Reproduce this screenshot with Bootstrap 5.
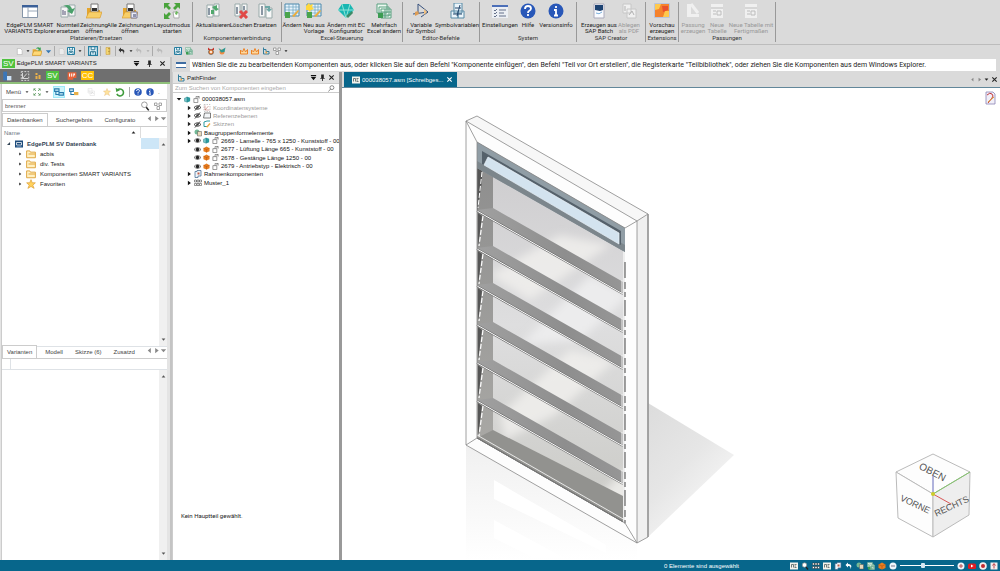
<!DOCTYPE html>
<html lang="de">
<head>
<meta charset="utf-8">
<meta name="viewport" content="width=device-width, initial-scale=1">
<title>EdgePLM SMART VARIANTS</title>
<link href="https://cdn.jsdelivr.net/npm/bootstrap@5.3.0/dist/css/bootstrap.min.css" rel="stylesheet">
<style>
:root{--teal:#07668b;--grey:#dadada;--ui:Roboto,"Liberation Sans",Arial,sans-serif}
body{font:6px/6px "Liberation Sans",Arial,sans-serif;color:#222;background:var(--grey)}
button{font:inherit;color:inherit;border:0;background:none;padding:0}
svg{flex:none;display:block}
.i7{width:7px;height:7px}.i8{width:8px;height:8px}.i10{width:10px;height:10px}.i16{width:16px;height:16px}
.g2{gap:2px}.g3{gap:3px}
/* ribbon */
.ribbon{height:45px;border-bottom:1px solid #bcbcbc;font-family:var(--ui)}
.grp{height:40px;border-right:1px solid #999;margin-top:2px}
.tool{height:32px;display:flex;flex-direction:column;align-items:center;white-space:nowrap;text-align:center;gap:3px}
.tool svg{margin-top:1px}
.w16{width:16px}.w20{width:20px}.w24{width:24px}.w28{width:28px}.w32{width:32px}.w36{width:36px}.w40{width:40px}.w48{width:48px}
.faded{color:#999}
.faded svg{filter:grayscale(1);opacity:.6}
.cap{height:8px;line-height:8px;text-align:center;color:#333}
.pad2{padding:0 2px}
.quick{height:12px}
.split{width:1px;height:10px;background:#aaa}
/* left dock */
.dock{flex:0 0 172px;background:#e4e4e4;border-right:2px solid #c4c4c4}
.dockbody{background:#fff;margin:0 3px 0 1px;border-left:1px solid #ccc}
.title{height:12px;font:6px/8px "Liberation Sans",Arial,sans-serif;background:#e3e3e3}
.svbox{background:#4fc23f;color:#fff;font:8px/9px "Liberation Sans",Arial,sans-serif;padding:0 1px}
.modes{height:15px;background:#6f6f6f;border-bottom:2px solid #8fc07a}
.menubar{height:15px;color:#444;background:#fff}
.find{height:13px;border:1px solid #ccc;background:#fff}
.find input,.seek input{border:0;outline:0;background:none;min-width:0;color:#555;font-size:6px;line-height:8px;padding:0 2px}
.tabs{height:13px;color:#444;border-bottom:1px solid #ccc}
.tabs button{height:12px;padding:0 4px}
.tabs .on{border:1px solid #ccc;border-bottom:0;background:#fff;height:13px}
.toptabs{margin-top:2px}
.hdrow{height:11px}
.hdrow .end{width:27px;border-left:1px solid #ddd}
.vtree li{height:10px}
.vtree li:first-child{height:11px;font-weight:bold;color:#345}
.vtree .sel{width:18px;background:#cde6f7}
.vsize{flex:0 0 208px}
.bar{width:8px;background:#f0f0f0;color:#555}
/* prompt */
.prompt{height:15px;font:7px/12px Roboto,"Liberation Sans",sans-serif;background:var(--grey)}
.prompt output{height:12px;background:#fff;white-space:nowrap;overflow:hidden}
/* path finder */
.finder{flex:0 0 170px;min-width:0;overflow:hidden;background:#fff;border-right:3px solid #999;border-left:1px solid #ccc}
.finder .title{border-bottom:1px solid #ccc}
.seek{height:9px;border-bottom:1px solid #ccc}
.seek input::placeholder{color:#aaa}
.ptree{height:92px;margin-top:2px;padding-left:3px;display:grid;grid-auto-rows:1fr;line-height:8px;white-space:nowrap;color:#111}
.ptree .dim{color:#999}
.ptree .d1{padding-left:10px}.ptree .d2{padding-left:18px}
.note{padding:0 0 41px 8px;font-family:var(--ui)}
/* document */
.doctabs{height:16px;border-bottom:1px solid #62879a}
.doctab{background:var(--teal);color:#fff;width:113px;white-space:nowrap}
.stage{background:#fff;min-height:0}
.status{height:11px;background:var(--teal);color:#fff}
.zoom{appearance:none;width:54px;height:8px;background:linear-gradient(#fff,#fff) center/100% 1px no-repeat}
.zoom::-webkit-slider-thumb{appearance:none;width:4px;height:5px;background:#d7e8f2;border-radius:1px}
</style>
</head>
<body class="vh-100 d-flex flex-column overflow-hidden">
<svg width="0" height="0" class="position-absolute" aria-hidden="true"><defs>
<symbol id="panes" viewBox="0 0 16 16"><path d="M.5 2.500h15v12H.5z" fill="#fff" stroke="#8595a8"/><path d="M0 2h16v2.500H0z" fill="#3b6098"/><path d="M6 4v10M6 8h9" stroke="#9aa8b8"/></symbol>
<symbol id="swap" viewBox="0 0 16 16"><path d="M1 4h7v10H1zM9 2h6v11H9z" fill="#f4f4f4" stroke="#9aa"/><path d="M3 3q7-3 9 3l3-1-3 6-5-3 2-1q-2-4-6-4z" fill="#4aa06a"/><path d="M3 7v5M5 8v4" stroke="#557"/></symbol>
<symbol id="folder" viewBox="0 0 16 16"><path d="M1 5h5l1 2h7v8H1z" fill="#e4a52d"/><path d="M5 1h7v8H5z" fill="#fff" stroke="#777"/><path d="M6 5h5v3H6z" fill="#333"/><path d="M0 15l3-6h13l-2 6z" fill="#f8cf68" stroke="#d3952a" stroke-width=".6"/></symbol>
<symbol id="folders" viewBox="0 0 16 16"><use href="#folder"/><path d="M9 9h6v6H9z" fill="#e9eaf4" stroke="#7a7a98"/><path d="M11 11h3v3h-3z" fill="#8f93ad"/></symbol>
<symbol id="layout" viewBox="0 0 16 16"><path d="M0 0h6L4 2l3 3-2 2-3-3-2 2zM16 0v6l-2-2-3 3-2-2 3-3-2-2zM0 16v-6l2 2 3-3 2 2-3 3 2 2z" fill="#49a33c"/><path d="M9 9h3l3 1v5h-5z" fill="#fff" stroke="#aaa"/><path d="M12 8l2 1-1 3-2-1z" fill="#6db95d"/></symbol>
<symbol id="sync" viewBox="0 0 16 16"><path d="M2 2h6v12H2zM9 1h5v12H9z" fill="#f8f8f8" stroke="#9aa"/><path d="M7 4l5-2v3l2 1-3 2zM6 7h3v4H6z" fill="#50a86d"/><path d="M4 5v7" stroke="#678" stroke-width="1.500"/></symbol>
<symbol id="del" viewBox="0 0 16 16"><path d="M2 1h5v12H2zM9 1h5v7H9z" fill="#f8f8f8" stroke="#9aa"/><path d="M4 4v7M11 3v4" stroke="#678" stroke-width="1.500"/><path d="M7 8l7 7M14 8l-7 7" stroke="#e04a47" stroke-width="3"/></symbol>
<symbol id="repl" viewBox="0 0 16 16"><path d="M2 1h6v13H2zM9 5h6v10H9z" fill="#f8f8f8" stroke="#9aa"/><path d="M5 3v9" stroke="#678" stroke-width="1.500"/><path d="M8 3h5v3h2l-3 3-3-3h2V5H8z" fill="#6da7a6"/></symbol>
<symbol id="grid" viewBox="0 0 16 16"><path d="M1 1h14v12H1z" fill="#e8f4fc" stroke="#4a88ac"/><path d="M1 4h14M1 7h14M1 10h14M5 1v12M9 1v12M12 1v12" stroke="#6aa1bd" stroke-width=".7"/><path d="M1 9h5v6H1z" fill="#4aa44c"/><path d="M8 13l6-6 1 1-5 6z" fill="#efac37"/></symbol>
<symbol id="gridnew" viewBox="0 0 16 16"><use href="#grid"/><path d="M3 0l1 2 3-1-1 3 2 2-3 1-1 2-2-2-2 0V3z" fill="#ffd83d"/></symbol>
<symbol id="gem" viewBox="0 0 16 16"><path d="M4 1h8l4 6-8 8-8-8z" fill="#19b6b2"/><path d="M4 1l4 14 4-14M0 7h16" stroke="#8de5d8" fill="none"/><path d="M8 13l6-5 1 2-5 5z" fill="#3d8b67"/></symbol>
<symbol id="multi" viewBox="0 0 16 16"><path d="M1 1h10v9H1zM3 4h10v9H3zM5 6h10v9H5z" fill="#eefaf2" stroke="#5aa080"/><path d="M5 9h10M5 12h10M9 6v9" stroke="#5aa080"/><path d="M2 10h5v5H2z" fill="#3b9c52"/></symbol>
<symbol id="vari" viewBox="0 0 16 16"><path d="M5 1v10M0 11l15-2M5 1l10 8-7 5" stroke="#36507c" fill="none"/><path d="M2 9l3-1 1 3-4 2z" fill="#dc9c55"/><path d="M11 6l3 3-3 3z" fill="#f2c180"/></symbol>
<symbol id="symv" viewBox="0 0 16 16"><path d="M5 0h8v10H5zM2 8h7v7H2zM9 8h6v7H9z" fill="#eaf4fa" stroke="#5789a5"/><path d="M11 2L8 13M6 5h6M4 11h9" stroke="#24466d"/></symbol>
<symbol id="settings" viewBox="0 0 16 16"><path d="M0 2h16v13H0z" fill="#eceff4"/><path d="M0 2h16v2H0z" fill="#4c6fb8"/><path d="M2 7l1 1 2-2M2 10l1 1 2-2M2 13l1 1 2-2M7 7h7M7 10h5M7 13h7" stroke="#65718a" fill="none"/></symbol>
<symbol id="help" viewBox="0 0 16 16"><circle cx="8" cy="8" r="7.500" fill="#2857b8"/><path d="M5 6q0-3 3-3t3 2.500Q11 7 9 8q-1 .5-1 2M8 11v2" stroke="#fff" stroke-width="1.800" fill="none"/></symbol>
<symbol id="info" viewBox="0 0 16 16"><circle cx="8" cy="8" r="7.500" fill="#2857b8"/><path d="M8 3v2M6 7h2v5M6 12.500h4" stroke="#fff" stroke-width="1.800" fill="none"/></symbol>
<symbol id="sap" viewBox="0 0 16 16"><path d="M3 1h10v14H3z" fill="#f9fbff" stroke="#aab"/><path d="M4 2h8v5l-3 1-5-1z" fill="#1d4372"/><path d="M5 10q3 2 6-1" stroke="#7cb0dc" fill="none"/></symbol>
<symbol id="sheet" viewBox="0 0 16 16"><path d="M2 1h8v9H2zM6 6h9v9H6z" fill="#fff" stroke="#bbb"/><path d="M8 12l3-4 2 4M4 3v5" stroke="#999" fill="none"/></symbol>
<symbol id="fits" viewBox="0 0 16 16"><path d="M2 1h12v14H2z" fill="#fff"/><path d="M2 5h12M4 8h3M4 11h3M8 12V8h4v4z" stroke="#aaa" fill="none"/></symbol>
<symbol id="heat" viewBox="0 0 16 16"><path d="M1 1h14v13H1z" fill="#f5822c"/><path d="M1 1h6l-2 5-4 1zM9 14l2-6h4v6z" fill="#ffc94d"/><path d="M8 3h6v4L9 9z" fill="#e8502e"/><path d="M.5.5h15v14H.5z" fill="none" stroke="#b9c4dc"/></symbol>
<symbol id="fit" viewBox="0 0 16 16"><path d="M2 1h4v10h8v3H2z" fill="#fff"/><path d="M6 1l7 9" stroke="#fff" stroke-width="3"/></symbol>
<symbol id="page" viewBox="0 0 16 16"><path d="M3 1h7l4 4v10H3z" fill="#fff" stroke="#999"/></symbol>
<symbol id="open" viewBox="0 0 16 16"><path d="M1 5h5l2 2h6v8H1z" fill="#e5ad36"/><path d="M0 15l3-7h13l-2 7z" fill="#ffd977" stroke="#c98e25"/><path d="M6 5q2-5 7-2l1-2v6H9l2-2q-3-2-5 0z" fill="#39a153"/></symbol>
<symbol id="fold" viewBox="0 0 16 16"><path d="M1 3h5l1 2h8v9H1z" fill="#fff1c4" stroke="#dda23a" stroke-width="1.500"/><path d="M4 8h11" stroke="#e8b350" stroke-width="2"/></symbol>
<symbol id="save" viewBox="0 0 16 16"><path d="M1 1h14v14H1z" fill="#e4f5fc" stroke="#2680a3" stroke-width="2"/><path d="M5 1v5h6V1M4 15v-6h8v6M6 11h4" stroke="#27718e" stroke-width="1.500" fill="none"/></symbol>
<symbol id="undo" viewBox="0 0 16 16"><path d="M6 1L1 6l5 5V8q7-1 4 7 7-10-4-11z" fill="currentColor"/></symbol>
<symbol id="bug" viewBox="0 0 16 16"><circle cx="8" cy="10" r="5" fill="#f08c44" stroke="#333"/><path d="M2 1l6 5 6-5v5H2z" fill="#c6362f"/><circle cx="8" cy="10" r="2" fill="#fff"/></symbol>
<symbol id="bug2" viewBox="0 0 16 16"><circle cx="8" cy="10" r="5" fill="#f08c44"/><path d="M1 2l6 4 8-5-2 9-7 1z" fill="#2d9891"/></symbol>
<symbol id="orange" viewBox="0 0 16 16"><path d="M1 14V6l4 4 3-7 3 7 4-5v9z" fill="#fbd9a1" stroke="#ec8326" stroke-width="2"/></symbol>
<symbol id="stair" viewBox="0 0 16 16"><path d="M3 1v13h11V9H8V5H3" fill="none" stroke="#347e9c" stroke-width="2"/><path d="M7 9h3v4H7z" fill="#eda33e"/></symbol>
<symbol id="box" viewBox="0 0 16 16"><path d="M8 1l7 4v7l-7 3-7-3V5z" fill="#e87e20"/><path d="M1 5l7 3 7-3M8 8v7" stroke="#a94c0b" fill="none"/></symbol>
<symbol id="asm" viewBox="0 0 16 16"><path d="M6 1l8 3v8l-7 3z" fill="#2c9ba0"/><path d="M1 5l6-2v11l-6-2z" fill="#75c7cb" stroke="#24767d"/></symbol>
<symbol id="lock" viewBox="0 0 16 16"><path d="M2 6h9v9H2z" fill="#fff" stroke="#666" stroke-width="1.500"/><path d="M7 6V1h7v5M10 4l4-3" fill="none" stroke="#666" stroke-width="1.500"/></symbol>
<symbol id="eye" viewBox="0 0 16 16"><path d="M0 8q8-9 16 0-8 9-16 0z" fill="#fff" stroke="#333" stroke-width="1.500"/><circle cx="8" cy="8" r="4" fill="#222"/></symbol>
<symbol id="eyeoff" viewBox="0 0 16 16"><path d="M0 8q8-8 16 0-8 8-16 0z" fill="none" stroke="#333" stroke-width="2"/><circle cx="8" cy="8" r="3" fill="#555"/><path d="M2 15L14 1" stroke="#333" stroke-width="2"/></symbol>
<symbol id="axes" viewBox="0 0 16 16"><path d="M2 1h12v14H2z" fill="#fff" stroke="#999" stroke-dasharray="3 2"/><path d="M4 3v9h9M4 12l7-8" fill="none" stroke="#b35a53"/></symbol>
<symbol id="axesw" viewBox="0 0 16 16"><path d="M2 1h12v14H2z" fill="none" stroke="#ddd" stroke-width="1.500" stroke-dasharray="3 2"/><path d="M4 3v9h9M4 12l7-8" fill="none" stroke="#ddd" stroke-width="1.500"/></symbol>
<symbol id="steps" viewBox="0 0 16 16"><path d="M3 2h4v4H3zM3 8h4v6H3zM9 6h4v8H9z" fill="#e9b04a"/></symbol>
<symbol id="plane" viewBox="0 0 16 16"><path d="M3 2h12v10H1z" fill="#f3f5f7" stroke="#555" stroke-width="1.500"/></symbol>
<symbol id="sketch" viewBox="0 0 16 16"><path d="M2 13V4l6-2h6M2 13h7" fill="none" stroke="#2c9ba0" stroke-width="2"/><path d="M6 14l7-8 2 2-6 7z" fill="#eaaa41"/></symbol>
<symbol id="feat" viewBox="0 0 16 16"><circle cx="6" cy="6" r="5" fill="#72b896"/><path d="M7 5h8v9H7z" fill="#e8d9bb" stroke="#555"/></symbol>
<symbol id="frame" viewBox="0 0 16 16"><path d="M2 3h4V1h8v11H8v3H2z" fill="#edf5fb" stroke="#456c93" stroke-width="1.500"/><path d="M7 5h4v4H7z" fill="#c45c45"/></symbol>
<symbol id="dots" viewBox="0 0 16 16"><path d="M1 2h4v4H1zM6 2h4v4H6zM11 2h4v4h-4zM1 9h4v4H1zM6 9h4v4H6zM11 9h4v4h-4z" fill="#fff" stroke="#333"/></symbol>
<symbol id="star" viewBox="0 0 16 16"><path d="M8 1l2 5h5l-4 4 2 5-5-3-5 3 2-5-4-4h5z" fill="#ffd15c" stroke="#d9962b"/></symbol>
<symbol id="db" viewBox="0 0 16 16"><path d="M0 1h16v14H0z" fill="#1d4b7b"/><path d="M3 5h10v5H3z" fill="none" stroke="#fff" stroke-width="1.500"/><path d="M3 13h10" stroke="#86b0d8"/></symbol>
<symbol id="mag" viewBox="0 0 16 16"><circle cx="7" cy="6" r="4.500" fill="#fff" stroke="#888" stroke-width="1.300"/><path d="M10 10l4 5" stroke="#222" stroke-width="2.500"/></symbol>
<symbol id="magl" viewBox="0 0 16 16"><circle cx="9" cy="6" r="4.500" fill="none" stroke="#555" stroke-width="1.500"/><path d="M6 9l-5 6" stroke="#555" stroke-width="1.500"/></symbol>
<symbol id="filt" viewBox="0 0 16 16"><path d="M1 2h5v5H1zM10 2h5v5h-5zM6 9h5v6H6z" fill="#fff" stroke="#888" stroke-width="1.500"/></symbol>
<symbol id="expand" viewBox="0 0 16 16"><path d="M1 1h5L1 6zM15 1v5l-5-5zM1 15v-5l5 5zM15 15h-5l5-5z" fill="#58965b"/><path d="M3 3l3 3M13 3l-3 3M3 13l3-3M13 13l-3-3" stroke="#58965b" stroke-width="1.500"/></symbol>
<symbol id="link" viewBox="0 0 16 16"><path d="M1 3h7v4H1zM8 9h7v4H8zM3 7v5h5" fill="none" stroke="#2779ac" stroke-width="1.700"/></symbol>
<symbol id="link2" viewBox="0 0 16 16"><path d="M1 3h6v4H1zM3 7v5h5" fill="none" stroke="#2779ac" stroke-width="1.700"/><path d="M8 8h7v5H8z" fill="#e9b04a"/></symbol>
<symbol id="refresh" viewBox="0 0 16 16"><path d="M4 5a5.500 5.500 0 1 1-1 6" fill="none" stroke="#3f9b3c" stroke-width="2.500"/><path d="M1 1l1 7 6-3z" fill="#3f9b3c"/></symbol>
<symbol id="tile" viewBox="0 0 16 16"><path d="M2 1h6v14H2z" fill="#3a76b8"/><path d="M8 8h7v7H8z" fill="#cfe2f5"/></symbol>
<symbol id="badge1" viewBox="0 0 16 16"><path d="M1 2h14v9h-5v3H1z" fill="#e8633a"/><path d="M4 4v5M7 4v5M10 4v5M12 4v3" stroke="#fff" stroke-width="1.500"/></symbol>
<symbol id="ruler" viewBox="0 0 16 16"><path d="M4 1h8v14H4z" fill="#f5d672" stroke="#c79a36"/><path d="M8 3h4M9 6h3M8 9h4M9 12h3" stroke="#8a6820"/></symbol>
<symbol id="plate" viewBox="0 0 16 16"><path d="M0 1h16v14H0z" fill="#f3f3ec"/><path d="M3 11V5h4v6M9 5h4M9 8h3M9 11h4" stroke="#455" stroke-width="1.500" fill="none"/></symbol>
<symbol id="pinb" viewBox="0 0 16 16"><path d="M5 1h6v8h2v2H9v5H7v-5H3V9h2z" fill="#222"/></symbol>
<symbol id="down" viewBox="0 0 16 16"><path d="M2 2h12v3H2zM2 7h12l-6 7z" fill="#111"/></symbol>
<symbol id="cross" viewBox="0 0 16 16"><path d="M3 3l10 10M13 3L3 13" stroke="currentColor" stroke-width="2.500"/></symbol>
<symbol id="tl" viewBox="0 0 16 16"><path d="M11 2v12L4 8z" fill="currentColor"/></symbol>
<symbol id="tr" viewBox="0 0 16 16"><path d="M5 2v12l8-6z" fill="currentColor"/></symbol>
<symbol id="tse" viewBox="0 0 16 16"><path d="M13 3v10H3z" fill="currentColor"/></symbol>
<symbol id="td" viewBox="0 0 16 16"><path d="M2 5h12l-6 7z" fill="currentColor"/></symbol>
<symbol id="tu" viewBox="0 0 16 16"><path d="M2 11h12L8 4z" fill="currentColor"/></symbol>
<symbol id="play" viewBox="0 0 16 16"><rect y="3" width="16" height="11" rx="3" fill="#e01c23"/><path d="M6 5v6l5-3z" fill="#fff"/></symbol>
<symbol id="rec" viewBox="0 0 16 16"><circle cx="8" cy="8" r="7.500" fill="#f5efef"/><circle cx="8" cy="8" r="4" fill="#c02b31"/></symbol>
<symbol id="plus" viewBox="0 0 16 16"><circle cx="8" cy="8" r="7" fill="#eff6fa"/><path d="M4 8h8M8 4v8" stroke="#bb4e4e" stroke-width="2"/></symbol>
<symbol id="minus" viewBox="0 0 16 16"><circle cx="8" cy="8" r="7" fill="#eff6fa"/><path d="M4 8h8" stroke="#778" stroke-width="2"/></symbol>
<symbol id="share" viewBox="0 0 16 16"><path d="M1 1h14v14H1z" fill="#f7eeee"/><path d="M8 13V4M5 7l3-4 3 4" stroke="#b8434a" stroke-width="2" fill="none"/></symbol>
</defs></svg>

<header class="ribbon d-flex">
 <div class="grp pad2"><div class="d-flex">
  <button class="tool w48 ms-1"><svg class="i16"><use href="#panes"/></svg><span>EdgePLM SMART<br>VARIANTS Explorer</span></button>
  <button class="tool w28"><svg class="i16"><use href="#swap"/></svg><span>Normteil<br>ersetzen</span></button>
  <button class="tool w24"><svg class="i16"><use href="#folder"/></svg><span>Zeichnung<br>öffnen</span></button>
  <button class="tool w48"><svg class="i16"><use href="#folders"/></svg><span>Alle Zeichnungen<br>öffnen</span></button>
  <button class="tool w36"><svg class="i16"><use href="#layout"/></svg><span>Layoutmodus<br>starten</span></button>
 </div><div class="cap">Platzieren/Ersetzen</div></div>
 <div class="grp px-1"><div class="d-flex">
  <button class="tool w32"><svg class="i16"><use href="#sync"/></svg><span>Aktualisieren</span></button>
  <button class="tool w24"><svg class="i16"><use href="#del"/></svg><span>Löschen</span></button>
  <button class="tool w24"><svg class="i16"><use href="#repl"/></svg><span>Ersetzen</span></button>
 </div><div class="cap">Komponentenverbindung</div></div>
 <div class="grp"><div class="d-flex">
  <button class="tool w20"><svg class="i16"><use href="#grid"/></svg><span>Ändern</span></button>
  <button class="tool w24"><svg class="i16"><use href="#gridnew"/></svg><span>Neu aus<br>Vorlage</span></button>
  <button class="tool w40"><svg class="i16"><use href="#gem"/></svg><span>Ändern mit EC<br>Konfigurator</span></button>
  <button class="tool w36"><svg class="i16"><use href="#multi"/></svg><span>Mehrfach<br>Excel ändern</span></button>
 </div><div class="cap">Excel-Steuerung</div></div>
 <div class="grp pad2"><div class="d-flex">
  <button class="tool w32"><svg class="i16"><use href="#vari"/></svg><span>Variable<br>für Symbol</span></button>
  <button class="tool w40"><svg class="i16"><use href="#symv"/></svg><span>Symbolvariablen</span></button>
 </div><div class="cap">Editor-Befehle</div></div>
 <div class="grp pad2"><div class="d-flex">
  <button class="tool w36"><svg class="i16"><use href="#settings"/></svg><span>Einstellungen</span></button>
  <button class="tool w20"><svg class="i16"><use href="#help"/></svg><span>Hilfe</span></button>
  <button class="tool w36"><svg class="i16"><use href="#info"/></svg><span>Versionsinfo</span></button>
 </div><div class="cap">System</div></div>
 <div class="grp px-1"><div class="d-flex">
  <button class="tool w36"><svg class="i16"><use href="#sap"/></svg><span>Erzeugen aus<br>SAP Batch</span></button>
  <button class="tool w24 faded"><svg class="i16"><use href="#sheet"/></svg><span>Ablegen<br>als PDF</span></button>
 </div><div class="cap">SAP Creator</div></div>
 <div class="grp"><div class="d-flex">
  <button class="tool w32"><svg class="i16"><use href="#heat"/></svg><span>Vorschau<br>erzeugen</span></button>
 </div><div class="cap">Extensions</div></div>
 <div class="grp"><div class="d-flex">
  <button class="tool w28 faded"><svg class="i16"><use href="#fit"/></svg><span>Passung<br>erzeugen</span></button>
  <button class="tool w20 faded"><svg class="i16"><use href="#fits"/></svg><span>Neue<br>Tabelle</span></button>
  <button class="tool w48 faded"><svg class="i16"><use href="#fits"/></svg><span>Neue Tabelle mit<br>Fertigmaßen</span></button>
 </div><div class="cap">Passungen</div></div>
</header>

<nav class="quick d-flex align-items-center" aria-label="Schnellzugriff">
 <div class="dock h-100 border-0 bg-transparent d-flex align-items-center justify-content-between ps-3 pe-2">
  <svg class="i7"><use href="#page"/></svg><svg width="4" height="4"><use href="#td"/></svg>
  <svg class="i10"><use href="#open"/></svg><svg class="i7" color="#3678b4"><use href="#td"/></svg><i class="split"></i>
  <svg class="i7" opacity=".5"><use href="#page"/></svg><svg class="i8"><use href="#save"/></svg><svg width="4" height="4"><use href="#td"/></svg><i class="split"></i>
  <svg class="i10"><use href="#save"/></svg><i class="split"></i><svg class="i8"><use href="#ruler"/></svg><i class="split"></i>
  <svg class="i8" color="#333"><use href="#undo"/></svg><svg width="4" height="4"><use href="#td"/></svg><svg class="i8" color="#bbb"><use href="#undo"/></svg><svg width="4" height="4" color="#aaa"><use href="#td"/></svg><i class="split"></i>
  <svg class="i8" color="#bbb"><use href="#undo"/></svg>
 </div>
 <div class="d-flex align-items-center g3 pad2">
  <svg class="i8"><use href="#save"/></svg><svg class="i8"><use href="#multi"/></svg><i class="px-1"></i>
  <svg class="i8"><use href="#bug"/></svg><svg class="i8"><use href="#bug2"/></svg><i class="px-1"></i>
  <svg class="i8"><use href="#orange"/></svg><svg class="i8"><use href="#orange"/></svg><svg class="i8"><use href="#stair"/></svg><svg class="i8"><use href="#filt"/></svg><svg width="4" height="4"><use href="#td"/></svg>
 </div>
</nav>

<main class="d-flex flex-fill overflow-hidden">
 <aside class="dock d-flex flex-column">
  <div class="title d-flex align-items-center g2 pe-1 pad2"><span class="svbox">SV</span><span class="me-auto">EdgePLM SMART VARIANTS</span><svg class="i7"><use href="#down"/></svg><svg class="i7 mx-1"><use href="#pinb"/></svg><svg class="i7"><use href="#cross"/></svg></div>
  <div class="modes d-flex align-items-center gap-1 pad2">
   <svg class="i10"><use href="#tile"/></svg><svg class="i10 ms-1"><use href="#axesw"/></svg><svg class="i8"><use href="#steps"/></svg><span class="svbox">SV</span><svg class="i10 ms-1"><use href="#badge1"/></svg><span class="svbox bg-warning">CC</span>
  </div>
  <div class="dockbody flex-fill d-flex flex-column">
   <div class="menubar d-flex align-items-center gap-1 ps-1">
    <button>Menü</button><svg width="4" height="4"><use href="#td"/></svg><svg class="i8"><use href="#expand"/></svg><svg width="4" height="4"><use href="#td"/></svg>
    <span class="bg-info-subtle border border-info-subtle"><svg class="i10"><use href="#link"/></svg></span><svg class="i10"><use href="#link2"/></svg><svg class="i8 mx-1" opacity=".5"><use href="#sheet"/></svg><svg class="i8" opacity=".6"><use href="#star"/></svg><svg class="i10"><use href="#refresh"/></svg><i class="split"></i><svg class="i8"><use href="#help"/></svg><svg class="i8"><use href="#info"/></svg><span>.</span>
   </div>
   <div class="find d-flex align-items-center"><input class="flex-fill" aria-label="Suche" value="brenner"><svg class="i10"><use href="#mag"/></svg><svg class="i8 mx-1"><use href="#filt"/></svg></div>
   <div class="tabs toptabs d-flex align-items-end">
    <button class="on">Datenbanken</button><button class="ms-1">Suchergebnis</button><button class="ms-1 me-auto">Configurato</button>
    <svg class="i7 mb-1" color="#888"><use href="#tl"/></svg><svg class="i7 mb-1" color="#888"><use href="#tr"/></svg><svg class="i7 mb-1" color="#888"><use href="#td"/></svg>
   </div>
   <div class="hdrow d-flex align-items-center"><span class="me-auto pad2 text-secondary">Name</span><svg width="5" height="5" class="me-1"><use href="#tu"/></svg><span class="end h-100"></span></div>
   <div class="d-flex vsize">
    <ul class="vtree list-unstyled flex-fill m-0">
     <li class="d-flex align-items-center"><svg width="5" height="5" class="mx-1"><use href="#tse"/></svg><svg class="i8 me-1"><use href="#db"/></svg><span class="me-auto">EdgePLM SV Datenbank</span><span class="sel h-100"></span></li>
     <li class="d-flex align-items-center ps-3"><svg width="4" height="4"><use href="#tr"/></svg><svg class="i10 mx-1"><use href="#fold"/></svg>acbis</li>
     <li class="d-flex align-items-center ps-3"><svg width="4" height="4"><use href="#tr"/></svg><svg class="i10 mx-1"><use href="#fold"/></svg>div. Tests</li>
     <li class="d-flex align-items-center ps-3"><svg width="4" height="4"><use href="#tr"/></svg><svg class="i10 mx-1"><use href="#fold"/></svg>Komponenten SMART VARIANTS</li>
     <li class="d-flex align-items-center ps-3"><svg width="4" height="4"><use href="#tr"/></svg><svg class="i10 mx-1"><use href="#star"/></svg>Favoriten</li>
    </ul>
    <div class="bar d-flex flex-column justify-content-between align-items-center py-1"><svg width="5" height="5"><use href="#tu"/></svg><svg width="5" height="5"><use href="#td"/></svg></div>
   </div>
   <div class="tabs d-flex align-items-end border-top">
    <button class="on">Varianten</button><button class="ms-1">Modell</button><button class="ms-1">Skizze (6)</button><button class="ms-1 me-auto">Zusatzd</button>
    <svg class="i7 mb-1" color="#888"><use href="#tl"/></svg><svg class="i7 mb-1" color="#888"><use href="#tr"/></svg><svg class="i7 mb-1" color="#888"><use href="#td"/></svg>
   </div>
   <div class="hdrow border-bottom ps-2"><span class="d-block h-100 border-start"></span></div>
   <div class="flex-fill d-flex justify-content-end"><div class="bar d-flex flex-column justify-content-between align-items-center py-1"><svg width="5" height="5"><use href="#tu"/></svg><svg width="5" height="5"><use href="#td"/></svg></div></div>
  </div>
 </aside>

 <div class="flex-fill d-flex flex-column overflow-hidden">
  <div class="prompt d-flex align-items-center pe-1"><svg class="mx-1" width="10" height="6"><path d="M0 0h10v6H0z" fill="#fff"/><path d="M0 0h10v2H0zM0 5h10v1H0z" fill="#3e6ca2"/></svg><output class="flex-fill pad2">Wählen Sie die zu bearbeitenden Komponenten aus, oder klicken Sie auf den Befehl "Komponente einfügen", den Befehl "Teil vor Ort erstellen", die Registerkarte "Teilbibliothek", oder ziehen Sie die Komponenten aus dem Windows Explorer.</output></div>
  <div class="flex-fill d-flex overflow-hidden">
   <section class="finder d-flex flex-column">
    <div class="title d-flex align-items-center g2 px-1"><svg class="i8"><use href="#stair"/></svg><span class="me-auto">PathFinder</span><svg class="i7"><use href="#down"/></svg><svg class="i7"><use href="#pinb"/></svg><svg class="i7"><use href="#cross"/></svg></div>
    <div class="seek d-flex align-items-center pe-1"><input class="flex-fill" aria-label="Komponenten suchen" placeholder="Zum Suchen von Komponenten eingeben"><svg class="i7"><use href="#magl"/></svg></div>
    <ul class="ptree list-unstyled mb-0">
     <li class="d-flex align-items-center g2"><svg width="6" height="6"><use href="#td"/></svg><svg class="i7"><use href="#asm"/></svg><svg class="i7"><use href="#lock"/></svg>000038057.asm</li>
     <li class="d-flex align-items-center g2 d1 dim"><svg width="6" height="6" color="#222"><use href="#tr"/></svg><svg class="i7"><use href="#eyeoff"/></svg><svg class="i8"><use href="#axes"/></svg>Koordinatensysteme</li>
     <li class="d-flex align-items-center g2 d1 dim"><svg width="6" height="6" color="#222"><use href="#tr"/></svg><svg class="i7"><use href="#eyeoff"/></svg><svg class="i8"><use href="#plane"/></svg>Referenzebenen</li>
     <li class="d-flex align-items-center g2 d1 dim"><svg width="6" height="6" color="#222"><use href="#tr"/></svg><svg class="i7"><use href="#eyeoff"/></svg><svg class="i8"><use href="#sketch"/></svg>Skizzen</li>
     <li class="d-flex align-items-center g2 d1"><svg width="6" height="6"><use href="#tr"/></svg><svg class="i8"><use href="#feat"/></svg>Baugruppenformelemente</li>
     <li class="d-flex align-items-center g2 d1"><svg width="6" height="6"><use href="#tr"/></svg><svg class="i7"><use href="#eye"/></svg><svg class="i7"><use href="#asm"/></svg><svg class="i7"><use href="#lock"/></svg>2669 - Lamelle - 765 x 1250 - Kunststoff - 00 1</li>
     <li class="d-flex align-items-center g2 d2"><svg class="i7"><use href="#eye"/></svg><svg class="i7"><use href="#box"/></svg><svg class="i7"><use href="#lock"/></svg>2677 - Lüftung Länge 665 - Kunststoff - 00</li>
     <li class="d-flex align-items-center g2 d2"><svg class="i7"><use href="#eye"/></svg><svg class="i7"><use href="#box"/></svg><svg class="i7"><use href="#lock"/></svg>2678 - Gestänge Länge 1250 - 00</li>
     <li class="d-flex align-items-center g2 d2"><svg class="i7"><use href="#eye"/></svg><svg class="i7"><use href="#box"/></svg><svg class="i7"><use href="#lock"/></svg>2679 - Antriebstyp - Elektrisch - 00</li>
     <li class="d-flex align-items-center g2 d1"><svg width="6" height="6"><use href="#tr"/></svg><svg class="i8"><use href="#frame"/></svg>Rahmenkomponenten</li>
     <li class="d-flex align-items-center g2 d1"><svg width="6" height="6"><use href="#tr"/></svg><svg class="i8"><use href="#dots"/></svg>Muster_1</li>
    </ul>
    <div class="note mt-auto">Kein Hauptteil gewählt.</div>
   </section>

   <section class="flex-fill d-flex flex-column overflow-hidden">
    <div class="doctabs d-flex align-items-stretch pad2">
     <button class="doctab d-flex align-items-center g2 ps-2 pe-1"><svg class="i8"><use href="#plate"/></svg><span class="me-auto">000038057.asm [Schreibges...</span><svg class="i7"><use href="#cross"/></svg></button>
     <div class="ms-auto d-flex align-items-center g2"><svg width="5" height="5" color="#888"><use href="#tl"/></svg><svg width="5" height="5" color="#888"><use href="#tr"/></svg><svg width="5" height="5"><use href="#td"/></svg><svg class="i7"><use href="#cross"/></svg></div>
    </div>
    <div class="stage flex-fill">
    <svg class="w-100 h-100" viewBox="342 88 658 472" role="img" aria-label="Lamellenfenster">
     <defs>
      <linearGradient id="sh" x1="0" y1="0" x2=".7" y2="1"><stop offset="0" stop-color="#dcdcdc"/><stop offset=".5" stop-color="#e6e6e6"/><stop offset="1" stop-color="#fbfbfb"/></linearGradient>
      <linearGradient id="rf" x1="0" y1="0" x2="0" y2="1"><stop offset="0" stop-color="#f0f0f0"/><stop offset="1" stop-color="#fff"/></linearGradient>
      <linearGradient id="gl" x1="0" y1="0" x2="0" y2="1"><stop offset="0" stop-color="#cfced0"/><stop offset=".45" stop-color="#dededf"/><stop offset="1" stop-color="#cbcbc7"/></linearGradient>
      <linearGradient id="wall" x1="0" y1="0" x2="0" y2="1"><stop offset="0" stop-color="#8c8c8c"/><stop offset="1" stop-color="#b0afab"/></linearGradient>
      <linearGradient id="bd" x1="0" y1="0" x2="1" y2="0"><stop offset="0" stop-color="#a0a0a0"/><stop offset=".6" stop-color="#8e8e8e"/><stop offset="1" stop-color="#969696"/></linearGradient>
      <filter id="soft"><feGaussianBlur stdDeviation="4"/></filter>
      <clipPath id="pane"><path d="M493 176l132 76v271l-132-76z"/></clipPath>
      <g id="slat"><path d="M477 210l16-2 132 75v12l-2-1-146-83z" fill="url(#bd)"/><path d="M477 211l146 83" stroke="#666" stroke-width="2"/><path d="M477 211l146 83" stroke="#fff"/><path d="M478 213v34l4-31z" fill="#555"/><path d="M483 216l-4 30" stroke="#fff" stroke-width="1.200" stroke-dasharray="5 2"/><path d="M622 280v13" stroke="#eee"/></g>
     </defs>
     <path d="M648 403l86 52-86 82z" fill="url(#sh)"/>
     <path d="M466 445l171 98v17H466z" fill="url(#rf)"/>
     <path d="M494 480l112 65v8l-112-54zM494 520l70 38h-30l-40-20z" fill="#fff"/>
     <path d="M466 121l11-5 171 98v323l-11 6-171-98z" fill="#fdfdfd"/>
     <path d="M466 121l11-5 171 98-11 7z" fill="#f7f7f7"/><path d="M637 221l11-7v323l-11 6z" fill="#f0f0f0"/>
     <path d="M477 142l148 86v295l-148-85z" fill="url(#wall)"/>
     <path d="M493 176l132 76v255l-132-76z" fill="url(#gl)"/>
     <g clip-path="url(#pane)"><g filter="url(#soft)"><path d="M500 415l70-65 45 10-60 55-50 25zM490 275l70-40 50 10-80 55zM590 505l45-45v60z" fill="#f1f0ee" opacity=".8"/><path d="M520 345l70-70 40 20-50 45z" fill="#ececed"/></g></g>
     <path d="M477 438l16-8 132 67v26z" fill="#92928f"/>
     <use href="#slat"/><use href="#slat" y="38"/><use href="#slat" y="75"/><use href="#slat" y="114"/><use href="#slat" y="152"/><use href="#slat" y="190"/>
     <path d="M477 435l148 85" stroke="#fff" stroke-width=".8"/><path d="M477 438l148 85" stroke="#444"/>
     <path d="M624 250v273" stroke="#eee" stroke-width="2"/><path d="M625 262v261" stroke="#444" stroke-dasharray="16 4 7 3 5 3"/>
     <path d="M477 168l5 2v12l-5 30z" fill="#555"/><path d="M482 172l-4 36" stroke="#fff" stroke-dasharray="5 2"/>
     <path d="M477 142l148 86v24l-148-84z" fill="#909da5"/><path d="M477 161l148 84v7l-148-84z" fill="#7c868c"/>
     <path d="M482 151l139 80v14l-139-81z" fill="#55616b"/><path d="M488 157l131 76v11l-135-79z" fill="#d3e3ef" stroke="#eef5fa" stroke-width=".7"/>
     <g fill="none" stroke="#888" stroke-width=".8"><path d="M466 121l11-5 171 98v323l-11 6-171-98zM466 121l171 100v322M637 221l11-7M466 121l11 21 148 86 12-7M477 142v296l-11 7M477 438l148 85 12 20"/></g>
     <path d="M648 214v323" stroke="#999" stroke-width="1.500"/>
     <g stroke="#bbb" fill="#fdfdfd"><path d="M933 454l37 18-37 22-37-22z"/><path d="M896 472l37 22v43l-35-19z"/><path d="M970 472l-37 22v43l36-22z" fill="#eee"/></g>
     <g font-family="Liberation Sans,Arial,sans-serif" fill="#555" text-anchor="middle"><text font-size="10" transform="translate(931 475) rotate(27)">OBEN</text><text font-size="9" transform="translate(914 507) rotate(25)">VORNE</text><text font-size="9" transform="translate(953 509) rotate(-25)">RECHTS</text></g>
     <path d="M933 494v-18" stroke="#6268bb"/><path d="M933 494l37-22" stroke="#83c66b"/><path d="M933 494l18 10" stroke="#d95757"/><circle cx="933" cy="494" r="2" fill="#cccc28"/>
     <g><path d="M986 92h7l2 2v10h-9z" fill="#f1eff8" stroke="#8b83b4" stroke-width=".8"/><path d="M987 95q3-3 5-1 2 2 0 4l-4 5" fill="none" stroke="#c43b3d"/><path d="M988 102l6-5" stroke="#d99c3c"/></g>
    </svg>
    </div>
   </section>
  </div>
 </div>
</main>

<footer class="status d-flex align-items-center justify-content-end g3 pad2">
 <span class="me-5">0 Elemente sind ausgewählt</span>
 <svg class="i8"><use href="#plate"/></svg><svg class="i8"><use href="#mag"/></svg><svg class="i8"><use href="#dots"/></svg><svg class="i8"><use href="#plate"/></svg><svg class="i8"><use href="#frame"/></svg><svg class="i8" color="#fff"><use href="#undo"/></svg><svg class="i8"><use href="#feat"/></svg><svg class="i8"><use href="#multi"/></svg><svg class="i8"><use href="#box"/></svg><svg class="i8"><use href="#minus"/></svg>
 <input class="zoom" type="range" aria-label="Zoom" value="42"><svg class="i8"><use href="#plus"/></svg><svg class="i8"><use href="#play"/></svg><svg class="i8"><use href="#rec"/></svg><svg class="i8"><use href="#share"/></svg>
</footer>
<script src="https://cdn.jsdelivr.net/npm/bootstrap@5.3.0/dist/js/bootstrap.bundle.min.js"></script>
</body>
</html>
